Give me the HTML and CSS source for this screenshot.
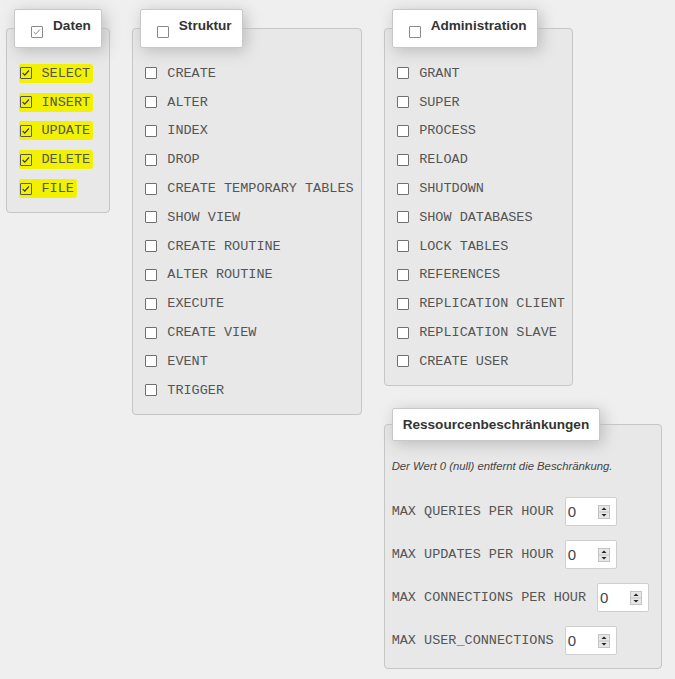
FILE: index.html
```html
<!DOCTYPE html>
<html lang="de">
<head>
<meta charset="utf-8">
<title>Privilegien</title>
<link rel="stylesheet" href="styles.css">
</head>
<body>
<div class="page">
  <fieldset class="group">
    <legend class="head"><span class="cb"><svg viewBox="0 0 12 12" width="10" height="10"><path d="M2 6 L4.5 8.5 L9.5 3" class="chk light"/></svg></span>Daten</legend>
    <div class="item"><span class="mark on"><span class="cb hl"><svg viewBox="0 0 12 12" width="10" height="10"><path d="M2 6 L4.5 8.5 L9.5 3" class="chk"/></svg></span><span class="code">SELECT</span></span></div>
    <div class="item"><span class="mark on"><span class="cb hl"><svg viewBox="0 0 12 12" width="10" height="10"><path d="M2 6 L4.5 8.5 L9.5 3" class="chk"/></svg></span><span class="code">INSERT</span></span></div>
    <div class="item"><span class="mark on"><span class="cb hl"><svg viewBox="0 0 12 12" width="10" height="10"><path d="M2 6 L4.5 8.5 L9.5 3" class="chk"/></svg></span><span class="code">UPDATE</span></span></div>
    <div class="item"><span class="mark on"><span class="cb hl"><svg viewBox="0 0 12 12" width="10" height="10"><path d="M2 6 L4.5 8.5 L9.5 3" class="chk"/></svg></span><span class="code">DELETE</span></span></div>
    <div class="item"><span class="mark on"><span class="cb hl"><svg viewBox="0 0 12 12" width="10" height="10"><path d="M2 6 L4.5 8.5 L9.5 3" class="chk"/></svg></span><span class="code">FILE</span></span></div>
  </fieldset>

  <fieldset class="group">
    <legend class="head"><span class="cb"></span>Struktur</legend>
    <div class="item"><span class="mark"><span class="cb"></span><span class="code">CREATE</span></span></div>
    <div class="item"><span class="mark"><span class="cb"></span><span class="code">ALTER</span></span></div>
    <div class="item"><span class="mark"><span class="cb"></span><span class="code">INDEX</span></span></div>
    <div class="item"><span class="mark"><span class="cb"></span><span class="code">DROP</span></span></div>
    <div class="item"><span class="mark"><span class="cb"></span><span class="code">CREATE TEMPORARY TABLES</span></span></div>
    <div class="item"><span class="mark"><span class="cb"></span><span class="code">SHOW VIEW</span></span></div>
    <div class="item"><span class="mark"><span class="cb"></span><span class="code">CREATE ROUTINE</span></span></div>
    <div class="item"><span class="mark"><span class="cb"></span><span class="code">ALTER ROUTINE</span></span></div>
    <div class="item"><span class="mark"><span class="cb"></span><span class="code">EXECUTE</span></span></div>
    <div class="item"><span class="mark"><span class="cb"></span><span class="code">CREATE VIEW</span></span></div>
    <div class="item"><span class="mark"><span class="cb"></span><span class="code">EVENT</span></span></div>
    <div class="item"><span class="mark"><span class="cb"></span><span class="code">TRIGGER</span></span></div>
  </fieldset>

  <fieldset class="group">
    <legend class="head"><span class="cb"></span>Administration</legend>
    <div class="item"><span class="mark"><span class="cb"></span><span class="code">GRANT</span></span></div>
    <div class="item"><span class="mark"><span class="cb"></span><span class="code">SUPER</span></span></div>
    <div class="item"><span class="mark"><span class="cb"></span><span class="code">PROCESS</span></span></div>
    <div class="item"><span class="mark"><span class="cb"></span><span class="code">RELOAD</span></span></div>
    <div class="item"><span class="mark"><span class="cb"></span><span class="code">SHUTDOWN</span></span></div>
    <div class="item"><span class="mark"><span class="cb"></span><span class="code">SHOW DATABASES</span></span></div>
    <div class="item"><span class="mark"><span class="cb"></span><span class="code">LOCK TABLES</span></span></div>
    <div class="item"><span class="mark"><span class="cb"></span><span class="code">REFERENCES</span></span></div>
    <div class="item"><span class="mark"><span class="cb"></span><span class="code">REPLICATION CLIENT</span></span></div>
    <div class="item"><span class="mark"><span class="cb"></span><span class="code">REPLICATION SLAVE</span></span></div>
    <div class="item"><span class="mark"><span class="cb"></span><span class="code">CREATE USER</span></span></div>
  </fieldset>

  <fieldset class="group res">
    <legend class="head">Ressourcenbeschränkungen</legend>
    <p class="note">Der Wert 0 (null) entfernt die Beschränkung.</p>
    <div class="limit"><span class="code">MAX QUERIES PER HOUR</span><span class="num"><span>0</span><svg class="spin" viewBox="0 0 12 14" width="12" height="14"><rect x="0.5" y="0.5" width="11" height="13" fill="#e6e6e6" stroke="#c4c4c4"/><line x1="1" y1="7" x2="11" y2="7" stroke="#c4c4c4"/><path d="M6 2.5 L8.5 5 L3.5 5 Z" fill="#222"/><path d="M3.5 9 L8.5 9 L6 11.5 Z" fill="#222"/></svg></span></div>
    <div class="limit"><span class="code">MAX UPDATES PER HOUR</span><span class="num"><span>0</span><svg class="spin" viewBox="0 0 12 14" width="12" height="14"><rect x="0.5" y="0.5" width="11" height="13" fill="#e6e6e6" stroke="#c4c4c4"/><line x1="1" y1="7" x2="11" y2="7" stroke="#c4c4c4"/><path d="M6 2.5 L8.5 5 L3.5 5 Z" fill="#222"/><path d="M3.5 9 L8.5 9 L6 11.5 Z" fill="#222"/></svg></span></div>
    <div class="limit"><span class="code">MAX CONNECTIONS PER HOUR</span><span class="num"><span>0</span><svg class="spin" viewBox="0 0 12 14" width="12" height="14"><rect x="0.5" y="0.5" width="11" height="13" fill="#e6e6e6" stroke="#c4c4c4"/><line x1="1" y1="7" x2="11" y2="7" stroke="#c4c4c4"/><path d="M6 2.5 L8.5 5 L3.5 5 Z" fill="#222"/><path d="M3.5 9 L8.5 9 L6 11.5 Z" fill="#222"/></svg></span></div>
    <div class="limit"><span class="code">MAX USER_CONNECTIONS</span><span class="num"><span>0</span><svg class="spin" viewBox="0 0 12 14" width="12" height="14"><rect x="0.5" y="0.5" width="11" height="13" fill="#e6e6e6" stroke="#c4c4c4"/><line x1="1" y1="7" x2="11" y2="7" stroke="#c4c4c4"/><path d="M6 2.5 L8.5 5 L3.5 5 Z" fill="#222"/><path d="M3.5 9 L8.5 9 L6 11.5 Z" fill="#222"/></svg></span></div>
  </fieldset>
</div>
</body>
</html>
```

FILE: styles.css
```css
html, body {
  margin: 0;
  padding: 0;
}

body {
  background: #efefef;
  font-family: "Liberation Sans", Arial, sans-serif;
  color: #444;
}

.page {
  padding: 9px 0 0 6px;
}

.group {
  float: left;
  margin: 0 22px 22px 0;
  padding: 11px 7px 9px;
  border: 1px solid #c6c6c6;
  border-radius: 4px;
  background: #e8e8e8;
  min-width: 0;
}

.group.res {
  margin-right: 0;
  padding: 18px 7px 6px;
}

.head {
  display: flex;
  align-items: flex-start;
  padding: 8px 10px 9px;
  background: #fff;
  border: 1px solid #c8c8c8;
  border-radius: 2px;
  box-shadow: 3px 3px 15px #bbb;
  font-weight: bold;
  font-size: 13.6px;
  line-height: 16px;
  color: #333;
}

.res .head {
  padding: 8px 10px 7px;
}

.head .cb {
  margin: 8px 10px 0 6px;
  border-color: #888;
}

.cb {
  flex: none;
  box-sizing: border-box;
  width: 12px;
  height: 12px;
  border: 1px solid #707070;
  border-radius: 1px;
  background: #fff;
  display: flex;
  align-items: center;
  justify-content: center;
}

.cb svg {
  display: block;
}

.chk {
  fill: none;
  stroke: #333;
  stroke-width: 1.4;
}

.chk.light {
  stroke: #777;
  stroke-width: 1.1;
}

.cb.hl {
  background: transparent;
  border-color: #555;
}

.item {
  display: flex;
  align-items: center;
  height: 28.8px;
  padding-left: 4.5px;
}

.mark {
  display: inline-flex;
  align-items: center;
  padding-left: 1px;
}

.mark .cb {
  margin-right: 10px;
}

.mark.on {
  background: #f2f200;
  margin: -2px -3px -2px 0;
  padding: 2px 3px 2px 1px;
  border-radius: 2px 3px 3px 2px;
}

.code {
  font-family: "Liberation Mono", "Courier New", monospace;
  font-size: 13.5px;
  color: #555;
  white-space: nowrap;
}

.note {
  margin: 0 0 17.5px;
  font-style: italic;
  font-size: 11.3px;
  line-height: 14px;
  color: #444;
  white-space: nowrap;
}

.limit {
  display: flex;
  align-items: center;
  height: 43px;
}

.num {
  margin-left: 11px;
  margin-right: 5px;
  box-sizing: border-box;
  width: 52px;
  height: 29px;
  border: 1px solid #cfcfcf;
  border-radius: 2px;
  background: #fff;
  display: flex;
  align-items: center;
  justify-content: space-between;
  padding: 0 6px 0 2px;
  font-size: 15px;
  color: #444;
}

.spin {
  display: block;
}
```
